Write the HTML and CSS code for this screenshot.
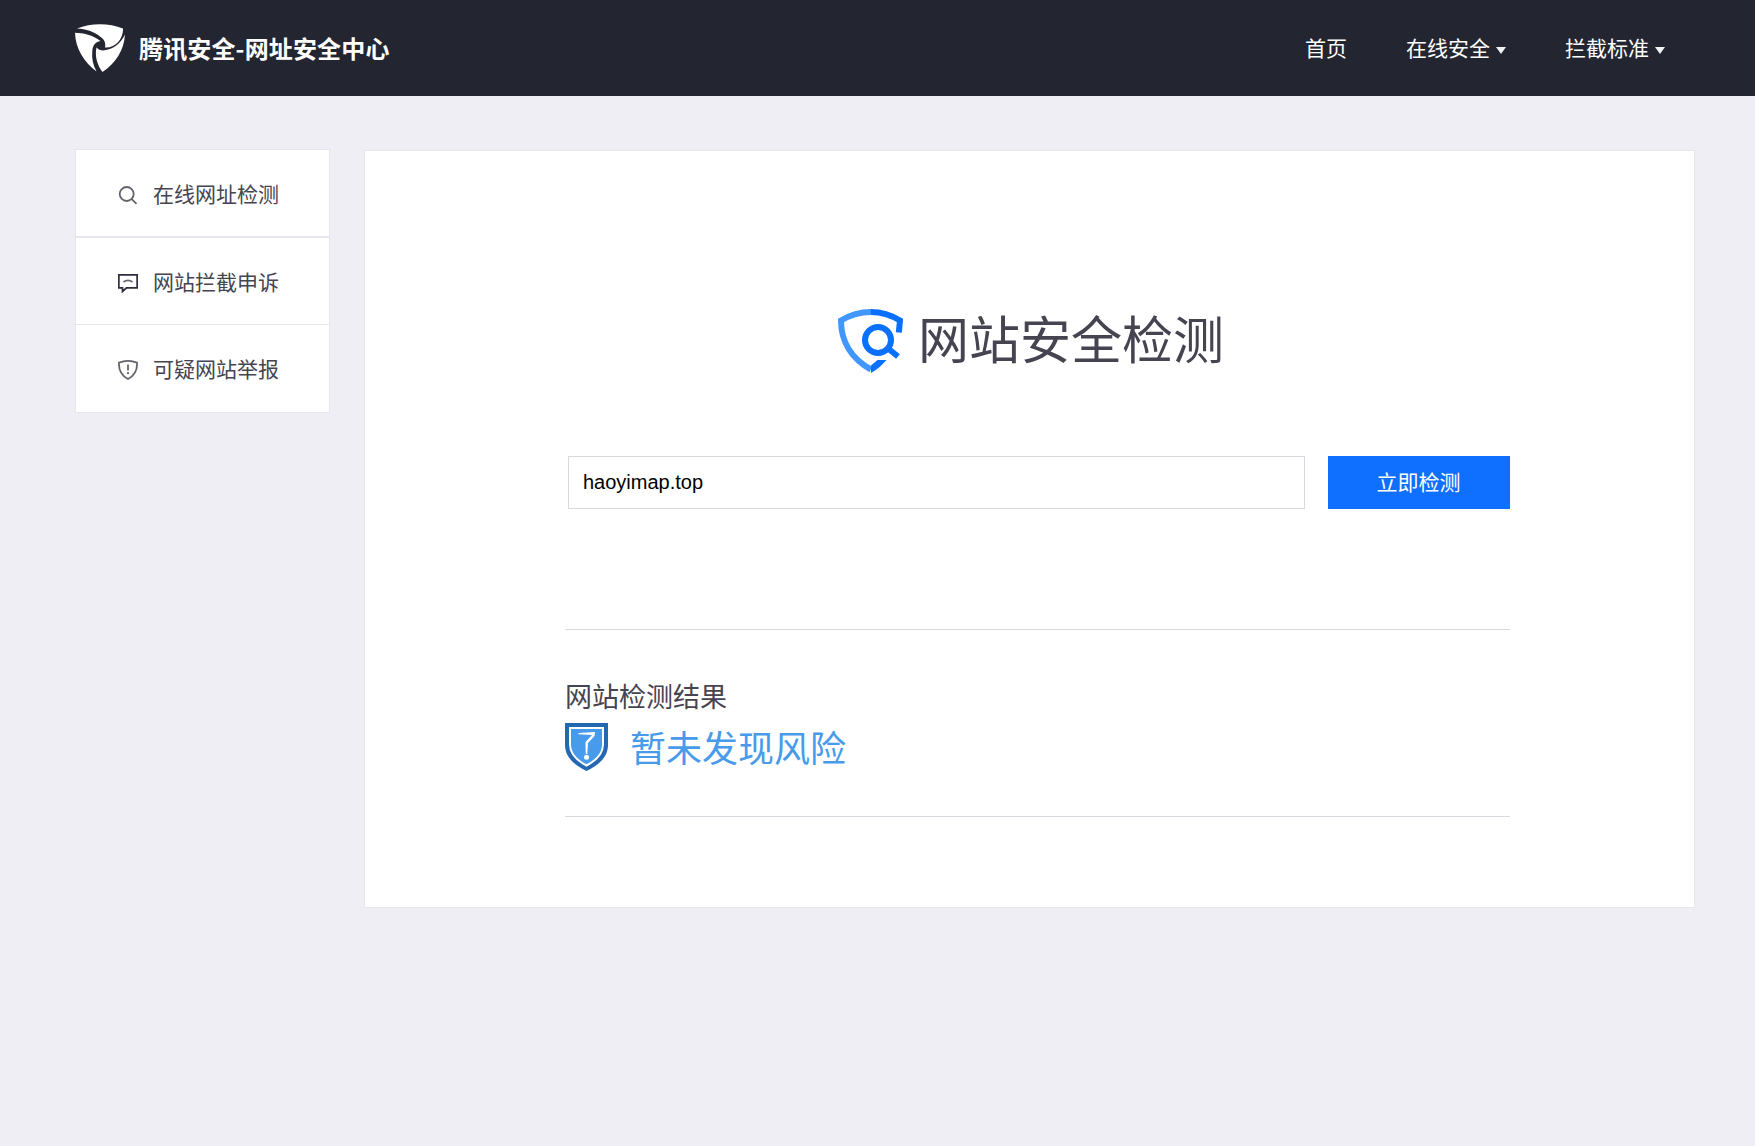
FILE: index.html
```
<!DOCTYPE html>
<html lang="zh-CN">
<head>
    <meta charset="utf-8">
    <title>腾讯安全-网址安全中心</title>
    <link rel="stylesheet" href="styles.css">
</head>
<body>
<div class="header">
    <a href="#" class="logo">
        <svg class="logo_icon" viewBox="0 0 50 48">
            <path d="M2 4.500C16-1.300 34-1.300 48 4.500C48.500 14 41 24 30 23.500C31 18 29 15 25 12.500C19 7.500 11 5 2 4.500Z"/>
            <path d="M0 8.800C8 9 18 11 25.500 17C20 18 17.500 22 17.300 27C16.500 34 18 41 21.500 47.500C9 38 .5 25 0 8.800Z"/>
            <path d="M50 10.500C49 26 41 39 27.500 48C22.500 42 19.500 32 21.500 23.500C24 26 27 27 31 26C39 24.500 46 19 50 10.500Z"/>
        </svg>
        <span>腾讯安全-网址安全中心</span>
    </a>
    <ul class="nav">
        <li><a href="#">首页</a></li>
        <li><a href="#">在线安全<i class="arrow"></i></a></li>
        <li><a href="#">拦截标准<i class="arrow"></i></a></li>
    </ul>
</div>
<div class="wrap">
    <ul class="side">
        <li class="on"><a href="#">
            <svg viewBox="0 0 20 20"><circle cx="8.700" cy="9" r="7"/><path d="M13.500 13.800L18.500 18.800"/></svg>
            <span>在线网址检测</span></a></li>
        <li><a href="#">
            <svg viewBox="0 0 20 20"><path class="dark" d="M.8 1.800H19.200V14.800H8.500L4.500 18.500V14.800H.8Z"/><path d="M5.500 9Q10 5.800 14.500 9"/></svg>
            <span>网站拦截申诉</span></a></li>
        <li><a href="#">
            <svg viewBox="0 0 20 20"><path d="M1 2.600Q10-.8 19 2.600C19.500 10 16.500 15.500 10 19C3.500 15.500 .5 10 1 2.600Z"/><path d="M10 4.500V10.500M10 12V14"/></svg>
            <span>可疑网站举报</span></a></li>
    </ul>
    <div class="main">
        <h1 class="title">
            <svg viewBox="0 0 65 64">
                <path class="light" d="M33 3C22 3 12 6 3 11.500C3 33 14 50 33 60.500"/>
                <path d="M33 3C43 3 53 6 62 11.500L60.800 23.500"/>
                <path class="fill" d="M33 56.500L39.500 51H48.500C44 56.500 39 60.500 33 64Z"/>
                <circle cx="40" cy="31" r="13"/>
                <path d="M49.500 39L60 47.500"/>
            </svg>
            <span>网站安全检测</span>
        </h1>
        <form class="search" onsubmit="return false">
            <input type="text" class="txt" value="haoyimap.top">
            <button type="submit" class="btn">立即检测</button>
        </form>
        <div class="result">
            <h2>网站检测结果</h2>
            <div class="state">
                <svg viewBox="0 0 43 48">
                    <path fill="#2468b2" d="M0 0H43V22C43 34 34 42 21.500 48C9 42 0 34 0 22Z"/>
                    <path fill="#479bec" stroke="#fff" stroke-width="2" d="M5 5H38V21.500C38 31 31 37.500 21.500 42.500C12 37.500 5 31 5 21.500Z"/>
                    <path fill="#fff" d="M13.500 10L30 9L29.500 13L23 20L22.300 31H20.700L20.500 19L27 12L13.500 11.300Z"/>
                    <circle fill="#fff" cx="21.500" cy="34.300" r="2.500"/>
                </svg>
                <span>暂未发现风险</span>
            </div>
        </div>
    </div>
</div>
</body>
</html>
```
FILE: styles.css
```
* {margin:0; padding:0; box-sizing:border-box}
body {background:#efeef4; color:#464450; font:21px/30px "Noto Sans CJK SC", sans-serif}
ul {list-style:none}
a {color:inherit; text-decoration:none}
svg {display:block; flex:none}

.header {display:flex; justify-content:space-between; height:96px; padding:0 90px 0 75px; background:#232531; color:#fff}
.logo {display:flex; align-items:center; font-size:24px; font-weight:bold; letter-spacing:.15px}
.logo_icon {width:50px; height:48px; margin-right:14px; fill:#fff}
.nav {display:flex; align-items:center; gap:59px; padding-bottom:2px}
.nav a {display:flex; align-items:center}
.arrow {margin:6px 0 0 6px; border:5px solid transparent; border-top:7px solid #f2f2f4; border-bottom:0}

.wrap {display:flex; align-items:flex-start; padding:53px 60px 0 75px}
.side {width:255px; border:1px solid #e6e6ec; background:#fff}
.side li {height:87px; border-bottom:1px solid #e6e6ec}
.side li.on {height:88px; border-bottom-width:2px}
.side li:last-child {border:0}
.side a {display:flex; align-items:center; height:86px; padding-left:42px}
.side svg {width:20px; height:20px; margin:4px 15px 0 0; fill:none; stroke:#64646f; stroke-width:1.8}
.side svg .dark {stroke:#2e2e3c}

.main {width:1331px; height:758px; margin:1px 0 0 34px; padding:152px 184px 0 200px; border:1px solid #e6e6ec; background:#fff}
.title {display:flex; align-items:center; height:76px; padding-left:273px; font-size:51px; font-weight:normal; line-height:76px}
.title svg {width:65px; height:64px; margin-right:15px; fill:none; stroke:#0a70ff; stroke-width:6}
.title span {padding-bottom:9px}
.title .light {stroke:#4297ff}
.title .fill {fill:#0a70ff; stroke:none}
.search {display:flex; justify-content:space-between; margin-top:77px; padding-left:3px}
.txt {width:737px; height:53px; padding:0 14px; border:1px solid #d8d8e0; background:#fff; color:#000; font:20px "Liberation Sans", Arial, sans-serif; outline:none}
.btn {width:182px; height:53px; padding:0 1px 3px 0; border:0; background:#0f70ff; color:#fff; font:21px "Noto Sans CJK SC", sans-serif}
.result {height:188px; margin-top:120px; padding-top:46px; border:solid #d9d9df; border-width:1px 0}
.result h2 {font-size:27px; font-weight:normal; line-height:40px}
.state {display:flex; height:48px; margin-top:7px; color:#479bea; font-size:36px; line-height:48px}
.state svg {width:43px; height:48px; margin-right:22px}
.state span {margin-top:-1px}
```
